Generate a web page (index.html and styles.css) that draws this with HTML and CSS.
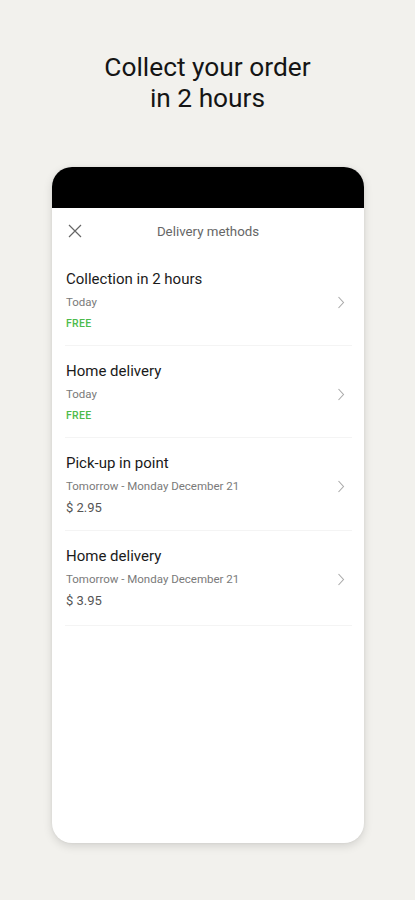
FILE: index.html
```html
<!DOCTYPE html>
<html lang="en">
<head>
<meta charset="utf-8">
<title>Delivery methods</title>
<link rel="stylesheet" href="styles.css">
</head>
<body>
<main class="page">
  <h1 class="headline">Collect your order<br>in 2 hours</h1>
  <section class="phone">
    <div class="statusbar"></div>
    <header class="topbar">
      <svg class="close" width="14" height="14" viewBox="0 0 14 14" aria-hidden="true">
        <path d="M1 1 L13 13 M13 1 L1 13" stroke="#666" stroke-width="1.2" fill="none"/>
      </svg>
      <span class="topbar-title">Delivery methods</span>
    </header>
    <ul class="methods">
      <li class="method">
        <div class="method-title">Collection in 2 hours</div>
        <div class="method-row">
          <span class="method-date">Today</span>
          <svg class="chev" width="8" height="13" viewBox="0 0 8 13" aria-hidden="true"><path d="M1.5 1 L6.5 6.5 L1.5 12" stroke="#aaa" stroke-width="1.1" fill="none"/></svg>
        </div>
        <div class="method-price free">FREE</div>
      </li>
      <li class="method">
        <div class="method-title">Home delivery</div>
        <div class="method-row">
          <span class="method-date">Today</span>
          <svg class="chev" width="8" height="13" viewBox="0 0 8 13" aria-hidden="true"><path d="M1.5 1 L6.5 6.5 L1.5 12" stroke="#aaa" stroke-width="1.1" fill="none"/></svg>
        </div>
        <div class="method-price free">FREE</div>
      </li>
      <li class="method">
        <div class="method-title">Pick-up in point</div>
        <div class="method-row">
          <span class="method-date">Tomorrow - Monday December 21</span>
          <svg class="chev" width="8" height="13" viewBox="0 0 8 13" aria-hidden="true"><path d="M1.5 1 L6.5 6.5 L1.5 12" stroke="#aaa" stroke-width="1.1" fill="none"/></svg>
        </div>
        <div class="method-price">$ 2.95</div>
      </li>
      <li class="method">
        <div class="method-title">Home delivery</div>
        <div class="method-row">
          <span class="method-date">Tomorrow - Monday December 21</span>
          <svg class="chev" width="8" height="13" viewBox="0 0 8 13" aria-hidden="true"><path d="M1.5 1 L6.5 6.5 L1.5 12" stroke="#aaa" stroke-width="1.1" fill="none"/></svg>
        </div>
        <div class="method-price">$ 3.95</div>
      </li>
    </ul>
  </section>
</main>
</body>
</html>
```
FILE: styles.css
```css
html, body {
  margin: 0;
  padding: 0;
  background: #f2f1ed;
}
body {
  font-family: Roboto, "Noto Sans", "Liberation Sans", sans-serif;
  width: 415px;
  height: 900px;
  overflow: hidden;
}
.page {
  display: flex;
  flex-direction: column;
  align-items: center;
  padding-top: 52px;
}
.headline {
  margin: 0;
  font-size: 26.3px;
  line-height: 31px;
  font-weight: 400;
  color: #151515;
  text-align: center;
}
.phone {
  margin-top: 53px;
  width: 312px;
  height: 676px;
  background: #fff;
  border-radius: 20px;
  overflow: hidden;
  box-shadow: 0 3px 10px rgba(0, 0, 0, 0.13), 0 0 3px rgba(0, 0, 0, 0.06);
  margin-left: 1px;
}
.statusbar {
  height: 41px;
  background: #000;
}
.topbar {
  height: 46px;
  display: flex;
  align-items: center;
  padding-left: 16px;
  box-sizing: border-box;
}
.close {
  display: block;
}
.topbar-title {
  flex: 1;
  text-align: center;
  font-size: 13.3px;
  color: #666;
  margin-right: 30px;
}
.methods {
  list-style: none;
  margin: 0;
  padding: 0;
}
.method {
  margin: 0 12px 0 13px;
  padding: 15px 0 14px 1px;
  border-bottom: 1px solid #f4f4f4;
  height: 92px;
  box-sizing: border-box;
}
.method:nth-child(3) { height: 93px; }
.method:nth-child(4) { height: 95px; }
.method-title {
  font-size: 15px;
  line-height: 20px;
  color: #1a1a1a;
}
.method-row {
  margin-top: 5px;
  display: flex;
  align-items: center;
  justify-content: space-between;
  height: 16px;
}
.method-date {
  font-size: 11.5px;
  color: #7a7a7a;
}
.chev {
  display: block;
  margin-right: 7px;
}
.method-price {
  margin-top: 6px;
  font-size: 13px;
  line-height: 16px;
  color: #555;
}
.method-price.free {
  font-size: 10.5px;
  font-weight: 500;
  color: #4cbb4c;
  letter-spacing: 0.3px;
}
```
